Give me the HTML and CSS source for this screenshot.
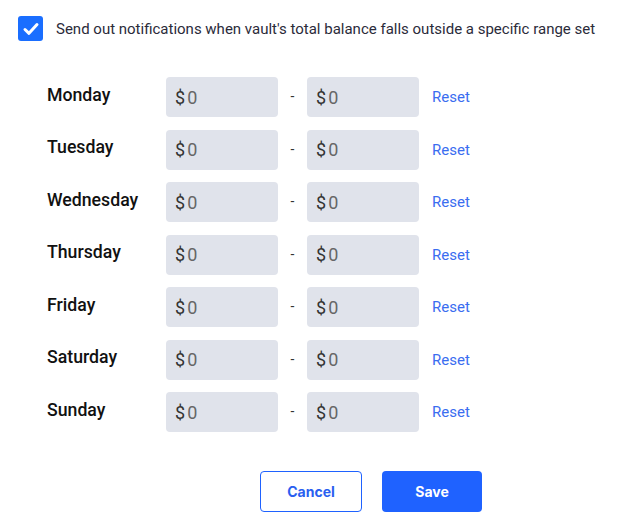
FILE: index.html
```html
<!DOCTYPE html>
<html lang="en">
<head>
  <meta charset="UTF-8">
  <meta name="viewport" content="width=device-width, initial-scale=1.0">
  <title>Vault balance notifications</title>
  <link rel="stylesheet" href="styles.css">
</head>
<body>
  <div class="panel">
    <label class="notify">
      <span class="check">
        <svg width="18" height="18" viewBox="0 0 18 18"><path d="M3 9.5 L7 13.3 L15 4.5" fill="none" stroke="#fff" stroke-width="3" stroke-linecap="round" stroke-linejoin="round"/></svg>
      </span>
      <span class="notify-text">Send out notifications when vault's total balance falls outside a specific range set</span>
    </label>

    <div class="days">
      <div class="day-row">
        <span class="day">Monday</span>
        <div class="amount"><span class="cur">$</span><span class="val">0</span></div>
        <span class="dash">-</span>
        <div class="amount"><span class="cur">$</span><span class="val">0</span></div>
        <a class="reset" href="#">Reset</a>
      </div>
      <div class="day-row">
        <span class="day">Tuesday</span>
        <div class="amount"><span class="cur">$</span><span class="val">0</span></div>
        <span class="dash">-</span>
        <div class="amount"><span class="cur">$</span><span class="val">0</span></div>
        <a class="reset" href="#">Reset</a>
      </div>
      <div class="day-row">
        <span class="day">Wednesday</span>
        <div class="amount"><span class="cur">$</span><span class="val">0</span></div>
        <span class="dash">-</span>
        <div class="amount"><span class="cur">$</span><span class="val">0</span></div>
        <a class="reset" href="#">Reset</a>
      </div>
      <div class="day-row">
        <span class="day">Thursday</span>
        <div class="amount"><span class="cur">$</span><span class="val">0</span></div>
        <span class="dash">-</span>
        <div class="amount"><span class="cur">$</span><span class="val">0</span></div>
        <a class="reset" href="#">Reset</a>
      </div>
      <div class="day-row">
        <span class="day">Friday</span>
        <div class="amount"><span class="cur">$</span><span class="val">0</span></div>
        <span class="dash">-</span>
        <div class="amount"><span class="cur">$</span><span class="val">0</span></div>
        <a class="reset" href="#">Reset</a>
      </div>
      <div class="day-row">
        <span class="day">Saturday</span>
        <div class="amount"><span class="cur">$</span><span class="val">0</span></div>
        <span class="dash">-</span>
        <div class="amount"><span class="cur">$</span><span class="val">0</span></div>
        <a class="reset" href="#">Reset</a>
      </div>
      <div class="day-row">
        <span class="day">Sunday</span>
        <div class="amount"><span class="cur">$</span><span class="val">0</span></div>
        <span class="dash">-</span>
        <div class="amount"><span class="cur">$</span><span class="val">0</span></div>
        <a class="reset" href="#">Reset</a>
      </div>
    </div>

    <div class="actions">
      <button class="btn btn-cancel">Cancel</button>
      <button class="btn btn-save">Save</button>
    </div>
  </div>
</body>
</html>
```

FILE: styles.css
```css
body {
  margin: 0;
  font-family: Roboto, 'Liberation Sans', sans-serif;
  color: #222;
  background: #fff;
}
.panel {
  padding: 16px 0 0 18px;
}
.notify {
  display: flex;
  align-items: center;
  gap: 13px;
}
.check {
  width: 25px;
  height: 25px;
  border-radius: 3px;
  background-color: #1a6eff;
  display: flex;
  align-items: center;
  justify-content: center;
}
.notify-text {
  font-size: 15px;
  color: #2b2b3a;
}
.days {
  display: flex;
  flex-direction: column;
  gap: 12.5px;
  margin: 36px 0 0 29px;
}
.day-row {
  display: flex;
  align-items: center;
}
.day {
  width: 119px;
  font-size: 17.7px;
  font-weight: 500;
  color: #111;
  padding-bottom: 5px;
}
.amount {
  width: 112px;
  height: 40px;
  box-sizing: border-box;
  padding-left: 9px;
  border-radius: 4px;
  background-color: #e0e3eb;
  display: flex;
  align-items: center;
  font-size: 18px;
}
.cur {
  color: #333;
}
.val {
  color: #666;
  margin-left: 2px;
}
.dash {
  width: 29px;
  text-align: center;
  font-size: 14px;
  color: #333;
  padding-bottom: 2px;
}
.reset {
  margin-left: 13px;
  font-size: 15px;
  color: #3a6df0;
  text-decoration: none;
}
.actions {
  display: flex;
  gap: 20px;
  margin: 39px 0 0 242px;
}
.btn {
  height: 41px;
  border-radius: 4px;
  font-family: Inter, Roboto, sans-serif;
  font-size: 14px;
  font-weight: 700;
  cursor: pointer;
}
.btn-cancel {
  width: 102px;
  background-color: #fff;
  color: #2a5ff0;
  border: 1px solid #1f62ff;
}
.btn-save {
  width: 100px;
  background-color: #1f62ff;
  color: #fff;
  border: none;
}
```
